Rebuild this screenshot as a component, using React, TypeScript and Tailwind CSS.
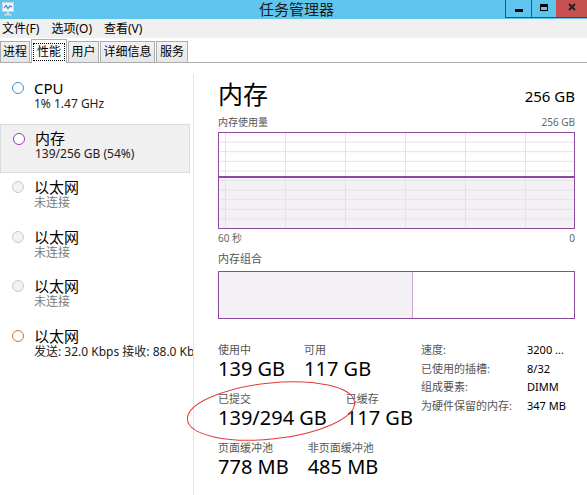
import React from "react";

const items = [
  { title: "CPU", sub: "1% 1.47 GHz", ring: "border-[#3e95d3] bg-white", subColor: "text-[#222]", selected: false },
  { title: "内存", sub: "139/256 GB (54%)", ring: "border-[#9a3db3] bg-white", subColor: "text-[#222]", selected: true },
  { title: "以太网", sub: "未连接", ring: "border-[#c9c9c9] bg-[#f2f2f2]", subColor: "text-[#7a7a7a]", selected: false },
  { title: "以太网", sub: "未连接", ring: "border-[#c9c9c9] bg-[#f2f2f2]", subColor: "text-[#7a7a7a]", selected: false },
  { title: "以太网", sub: "未连接", ring: "border-[#c9c9c9] bg-[#f2f2f2]", subColor: "text-[#7a7a7a]", selected: false },
  { title: "以太网", sub: "发送: 32.0 Kbps 接收: 88.0 Kbps", ring: "border-[#c8782a] bg-white", subColor: "text-[#222]", selected: false },
];

const tabs = [
  { label: "进程", w: "w-[30px]" },
  { label: "性能", w: "w-[36px]", active: true },
  { label: "用户", w: "w-[31px]" },
  { label: "详细信息", w: "w-[55px]" },
  { label: "服务", w: "w-[32px]" },
];

function Stat({ label, value }: { label: string; value: string }) {
  return (
    <div className="flex flex-col">
      <span className="text-[11px] leading-[14px] text-[#555] whitespace-nowrap">{label}</span>
      <span className="text-[20px] leading-[24px] text-black whitespace-nowrap">{value}</span>
    </div>
  );
}

function UsageChart() {
  const h = [9.6, 19.2, 28.8, 38.4, 48, 57.6, 67.2, 76.8, 86.4];
  const v = [7, 67, 127, 187, 247, 307];
  return (
    <svg width="357" height="97" viewBox="0 0 357 97" className="block">
      <rect x="0" y="45" width="357" height="52" fill="#f4f1f5" />
      {h.map((y) => (
        <line key={y} x1="1" x2="356" y1={y + 0.5} y2={y + 0.5} stroke="#e8dfec" strokeWidth="1" />
      ))}
      {v.map((x) => (
        <line key={x} x1={x + 0.5} x2={x + 0.5} y1="1" y2="96" stroke="#e8dfec" strokeWidth="1" />
      ))}
      <line x1="0" x2="357" y1="45" y2="45" stroke="#8b4a9e" strokeWidth="2" />
      <rect x="0.5" y="0.5" width="356" height="96" fill="none" stroke="#8b4a9e" strokeWidth="1" />
    </svg>
  );
}

export default function App() {
  return (
    <div className="relative w-[587px] h-[495px] overflow-hidden bg-white font-['Noto_Sans','Noto_Sans_CJK_SC',sans-serif] text-black">
      {/* title bar */}
      <div className="flex h-[19px] bg-[#5fc5ec]">
        <div className="w-[82px] pl-[2px] pt-[2px]">
          <svg width="12" height="14" viewBox="0 0 12 14">
            <rect x="0.5" y="0.5" width="11" height="9" fill="#eaf6fb" stroke="#c9d6dc" />
            <polyline points="2,6 4,3.5 6,6.5 8,4 10,5" fill="none" stroke="#2a86c6" strokeWidth="1.2" />
            <rect x="5" y="10" width="2" height="2" fill="#d6dfe3" />
            <rect x="2.5" y="12" width="7" height="1.5" fill="#d6dfe3" />
          </svg>
        </div>
        <div className="flex-1 text-center pl-[6px] text-[15px] leading-[18px] text-[#1a1a1a]">任务管理器</div>
        <div className="flex w-[82px] h-[18px]">
          <div className="w-[27px] h-full border border-t-0 border-[#2f5566] flex items-center justify-center">
            <div className="w-[8px] h-[3px] bg-black mt-[3px]" />
          </div>
          <div className="w-[24px] h-full border-b border-[#2f5566] flex items-center justify-center">
            <div className="w-[8px] h-[7px] border border-t-[3px] border-black -mt-[3px]" />
          </div>
          <div className="w-[31px] h-full bg-[#c75050] border-b border-[#7a3030] flex items-center justify-center">
            <svg width="8" height="8" viewBox="0 0 8 8" className="-mt-[3px]">
              <path d="M1 1 L7 7 M7 1 L1 7" stroke="#222" strokeWidth="1.8" />
            </svg>
          </div>
        </div>
      </div>

      {/* menu bar */}
      <div className="flex h-[19px] items-center gap-[12px] bg-[#f0f0f0] pl-[2px] text-[12px] leading-[16px] text-black">
        <span>文件(F)</span>
        <span>选项(O)</span>
        <span>查看(V)</span>
      </div>

      {/* tabs */}
      <div className="flex h-[25px] items-end gap-[1px] border-b border-[#acacac] bg-white">
        {tabs.map((t) =>
          t.active ? (
            <div
              key={t.label}
              className={`${t.w} h-[24px] -mb-px flex items-center justify-center border border-b-0 border-[#acacac] bg-white text-[12px]`}
            >
              <span className="border border-dotted border-black px-[3px] leading-[16px]">{t.label}</span>
            </div>
          ) : (
            <div
              key={t.label}
              className={`${t.w} h-[21px] flex items-center justify-center border border-b-0 border-[#acacac] bg-gradient-to-b from-[#f2f2f2] to-[#e6e6e6] text-[12px]`}
            >
              {t.label}
            </div>
          )
        )}
      </div>

      {/* body */}
      <div className="flex">
        {/* left list */}
        <div className="w-[194px] shrink-0 pt-[11px]">
          <div className="border-r border-[#e3e3e3] overflow-hidden">
            {items.map((it, i) => (
              <div
                key={i}
                className={`flex h-[49.5px] w-[190px] pl-[12px] ${
                  it.selected ? "bg-[#f0f0f0] border border-[#dadada] pl-[11px]" : ""
                }`}
              >
                <div className={`mt-[8px] w-[12px] h-[12px] shrink-0 rounded-full border-[1.5px] ${it.ring}`} />
                <div className={`ml-[10px] ${it.selected ? "pt-[4px]" : "pt-[5px]"} min-w-0`}>
                  <div className="text-[15px] leading-[18px] whitespace-nowrap">{it.title}</div>
                  <div className={`text-[12px] leading-[14px] whitespace-nowrap ${it.subColor}`}>{it.sub}</div>
                </div>
              </div>
            ))}
            <div className="h-[140px]" />
          </div>
        </div>

        {/* right detail */}
        <div className="flex-1 pl-[24px] pr-[12px] pt-[16px]">
          <div className="flex items-end justify-between">
            <span className="text-[25px] leading-[30px]">内存</span>
            <span className="text-[15px] leading-[20px] mb-[3px]">256 GB</span>
          </div>
          <div className="mt-[6px] flex justify-between text-[10px] leading-[14px] text-[#555]">
            <span>内存使用量</span>
            <span className="text-[#666]">256 GB</span>
          </div>
          <div className="mt-[3px]">
            <UsageChart />
          </div>
          <div className="mt-[2px] flex justify-between text-[10px] leading-[14px] text-[#666]">
            <span>60 秒</span>
            <span>0</span>
          </div>
          <div className="mt-[7px] text-[11px] leading-[14px] text-[#555]">内存组合</div>
          <div className="mt-[5px] flex h-[48px] border border-[#8b4a9e]">
            <div className="w-[194px] h-full bg-[#f4f1f5] border-r border-[#c9a6d4]" />
          </div>

          <div className="mt-[24px] flex items-start">
            <div className="w-[203px] shrink-0 flex flex-col gap-[11px]">
              <div className="flex gap-[19px]">
                <Stat label="使用中" value="139 GB" />
                <Stat label="可用" value="117 GB" />
              </div>
              <div className="flex gap-[19px]">
                <Stat label="已提交" value="139/294 GB" />
                <Stat label="已缓存" value="117 GB" />
              </div>
              <div className="flex gap-[19px]">
                <Stat label="页面缓冲池" value="778 MB" />
                <Stat label="非页面缓冲池" value="485 MB" />
              </div>
            </div>
            <div className="-mt-[2px] grid grid-cols-[106px_auto] text-[11px] leading-[18.7px]">
              <span className="text-[#555]">速度:</span>
              <span>3200 ...</span>
              <span className="text-[#555]">已使用的插槽:</span>
              <span>8/32</span>
              <span className="text-[#555]">组成要素:</span>
              <span>DIMM</span>
              <span className="text-[#555]">为硬件保留的内存:</span>
              <span>347 MB</span>
            </div>
          </div>
        </div>
      </div>

      {/* red annotation ellipse */}
      <svg className="pointer-events-none absolute left-0 top-0" width="587" height="495" viewBox="0 0 587 495">
        <ellipse cx="271" cy="411" rx="84" ry="28" transform="rotate(-6 271 411)" fill="none" stroke="#e23a3a" strokeWidth="1" />
      </svg>
    </div>
  );
}
